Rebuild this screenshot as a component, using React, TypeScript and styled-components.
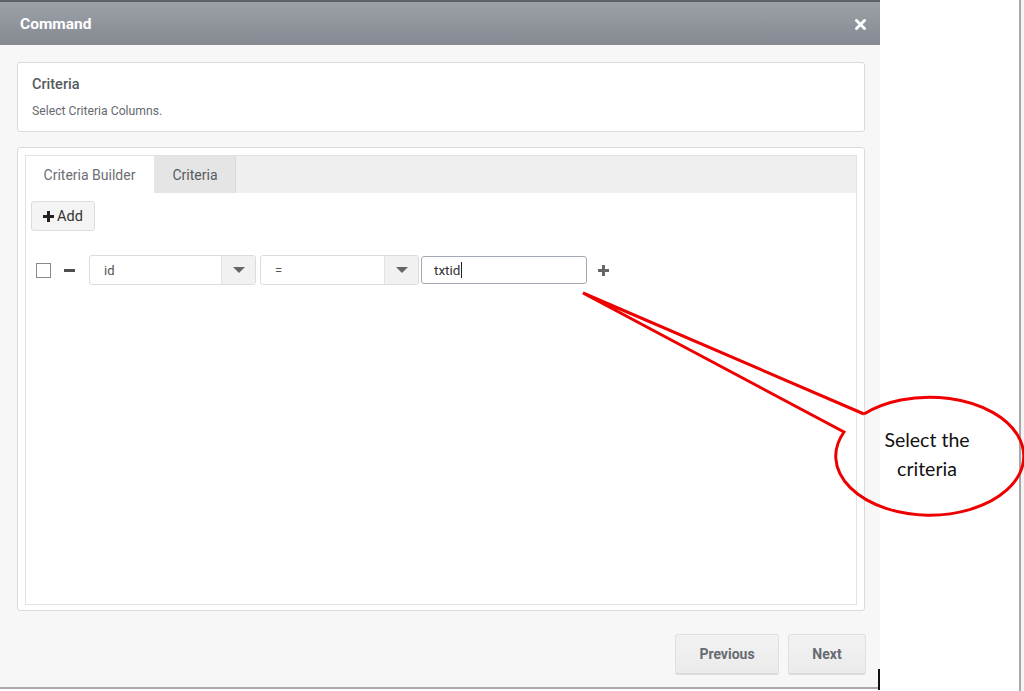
import React from "react";
import styled, { createGlobalStyle } from "styled-components";

const GlobalStyle = createGlobalStyle`
  html, body {
    margin: 0;
    padding: 0;
    background: #ffffff;
  }
  body {
    font-family: Roboto, "Liberation Sans", Arial, sans-serif;
    overflow: hidden;
  }
`;

const Page = styled.div`
  position: relative;
  display: flex;
  width: 1024px;
  height: 691px;
  background: #ffffff;
`;

const Modal = styled.div`
  position: relative;
  display: flex;
  flex-direction: column;
  width: 880px;
  height: 687px;
  background: #f7f7f7;
  border-bottom: 2px solid #a9a9a9;

  &::after {
    content: "";
    position: absolute;
    right: 0;
    bottom: -3px;
    width: 2px;
    height: 21px;
    background: #111;
  }
`;

const Header = styled.div`
  display: flex;
  align-items: center;
  justify-content: space-between;
  height: 45px;
  box-sizing: border-box;
  padding: 1px 14px 0 20px;
  border-top: 2px solid #5d6168;
  background: linear-gradient(#9ca0a7, #858a92);
  color: #ffffff;
`;

const Title = styled.div`
  font-size: 15.5px;
  font-weight: 700;
`;

const Close = styled.svg`
  width: 11px;
  height: 11px;
`;

const Body = styled.div`
  display: flex;
  flex-direction: column;
  padding: 17px 15px 0 17px;
  gap: 15px;
`;

const Panel = styled.div`
  background: #ffffff;
  border: 1px solid #dadada;
  border-radius: 3px;
`;

const InfoPanel = styled(Panel)`
  height: 70px;
  box-sizing: border-box;
  padding: 13px 14px;
`;

const PanelTitle = styled.div`
  font-size: 14.5px;
  font-weight: 500;
  color: #555a60;
`;

const PanelText = styled.div`
  margin-top: 11px;
  font-size: 12.2px;
  color: #666a70;
`;

const BuilderPanel = styled(Panel)`
  height: 464px;
  box-sizing: border-box;
  padding: 7px 7px 5px 7px;
  display: flex;
`;

const TabBox = styled.div`
  flex: 1;
  display: flex;
  flex-direction: column;
  border: 1px solid #e2e2e2;
`;

const TabBar = styled.div`
  display: flex;
  height: 37px;
  background: #efefef;
`;

const Tab = styled.div<{ $active?: boolean }>`
  display: flex;
  align-items: center;
  justify-content: center;
  width: ${(p) => (p.$active ? "127px" : "80px")};
  background: ${(p) => (p.$active ? "#ffffff" : "#e5e5e5")};
  border-right: 1px solid ${(p) => (p.$active ? "#ffffff" : "#d8d8d8")};
  border-left: ${(p) => (p.$active ? "none" : "1px solid #e8e8e8")};
  font-size: 14px;
  color: ${(p) => (p.$active ? "#6a6e74" : "#555a60")};
`;

const TabContent = styled.div`
  display: flex;
  flex-direction: column;
  align-items: flex-start;
  padding: 8px 5px;
  gap: 24px;
`;

const AddButton = styled.button`
  display: flex;
  align-items: center;
  gap: 3px;
  height: 30px;
  width: 64px;
  padding: 0 0 0 11px;
  border: 1px solid #dcdcdc;
  border-radius: 3px;
  background: #f4f4f4;
  font-family: Roboto, "Liberation Sans", Arial, sans-serif;
  font-size: 14.5px;
  color: #333;
`;

const Row = styled.div`
  display: flex;
  align-items: center;
  height: 30px;
  padding-left: 5px;
`;

const Checkbox = styled.span`
  width: 13px;
  height: 13px;
  border: 1px solid #8a8a8a;
  background: #fff;
`;

const Minus = styled.span`
  width: 11px;
  height: 3px;
  margin: 0 14px 0 13px;
  background: #4f4f4f;
`;

const Select = styled.div<{ $width: number }>`
  display: flex;
  width: ${(p) => p.$width}px;
  height: 30px;
  box-sizing: border-box;
  border: 1px solid #dcdcdc;
  border-radius: 3px;
  background: #ffffff;
  margin-right: 4px;
  overflow: hidden;
`;

const SelectValue = styled.div`
  flex: 1;
  display: flex;
  align-items: center;
  padding-left: 14px;
  font-size: 13px;
  color: #555;
`;

const SelectArrow = styled.div`
  display: flex;
  align-items: center;
  justify-content: center;
  width: 33px;
  background: #f1f1f1;
  border-left: 1px solid #e2e2e2;
`;

const Caret = styled.span`
  width: 0;
  height: 0;
  border-left: 6px solid transparent;
  border-right: 6px solid transparent;
  border-top: 6px solid #666;
`;

const TextInput = styled.div`
  display: flex;
  align-items: center;
  width: 166px;
  height: 28px;
  box-sizing: border-box;
  margin-left: -2px;
  padding-left: 12px;
  border: 1px solid #a4aab3;
  border-radius: 3px;
  background: #fff;
  font-size: 13.5px;
  color: #333;
`;

const Cursor = styled.span`
  display: inline-block;
  width: 1px;
  height: 16px;
  margin-left: 1px;
  background: #222;
`;

const PlusIcon = styled.svg`
  width: 11px;
  height: 11px;
  margin-left: 11px;
`;

const Footer = styled.div`
  display: flex;
  justify-content: flex-end;
  gap: 9px;
  padding: 23px 14px 0 0;
`;

const NavButton = styled.button<{ $width: number }>`
  width: ${(p) => p.$width}px;
  height: 41px;
  border: 1px solid #e0e0e0;
  border-bottom: 2px solid #dadada;
  border-radius: 3px;
  background: linear-gradient(#f2f2f2, #ebebeb);
  font-family: Roboto, "Liberation Sans", Arial, sans-serif;
  font-size: 14px;
  font-weight: 700;
  color: #666b71;
`;

const Scrollbar = styled.div`
  margin-left: auto;
  width: 3px;
  height: 100%;
  border-left: 2px solid #a8a8a8;
  background: #f4f4f4;
`;

const Callout = styled.svg`
  position: absolute;
  left: 0;
  top: 0;
  width: 1024px;
  height: 691px;
  pointer-events: none;
`;

const CalloutText = styled.text`
  font-family: Lato, "Open Sans", "Liberation Sans", sans-serif;
  font-size: 19.5px;
  fill: #111;
`;

const PlusPath = ({ color }: { color: string }) => (
  <path d="M4 0h3v4h4v3H7v4H4V7H0V4h4z" fill={color} />
);

export default function App() {
  return (
    <>
      <GlobalStyle />
      <Page>
        <Modal>
          <Header>
            <Title>Command</Title>
            <Close viewBox="0 0 11 11">
              <path
                d="M1.5 1.5l8 8M9.5 1.5l-8 8"
                stroke="#ffffff"
                strokeWidth="2.8"
                strokeLinecap="square"
              />
            </Close>
          </Header>
          <Body>
            <InfoPanel>
              <PanelTitle>Criteria</PanelTitle>
              <PanelText>Select Criteria Columns.</PanelText>
            </InfoPanel>
            <BuilderPanel>
              <TabBox>
                <TabBar>
                  <Tab $active>Criteria Builder</Tab>
                  <Tab>Criteria</Tab>
                </TabBar>
                <TabContent>
                  <AddButton>
                    <svg width="11" height="11" viewBox="0 0 11 11">
                      <PlusPath color="#222" />
                    </svg>
                    Add
                  </AddButton>
                  <Row>
                    <Checkbox />
                    <Minus />
                    <Select $width={167}>
                      <SelectValue>id</SelectValue>
                      <SelectArrow>
                        <Caret />
                      </SelectArrow>
                    </Select>
                    <Select $width={159}>
                      <SelectValue>=</SelectValue>
                      <SelectArrow>
                        <Caret />
                      </SelectArrow>
                    </Select>
                    <TextInput>
                      txtid
                      <Cursor />
                    </TextInput>
                    <PlusIcon viewBox="0 0 11 11">
                      <PlusPath color="#666" />
                    </PlusIcon>
                  </Row>
                </TabContent>
              </TabBox>
            </BuilderPanel>
          </Body>
          <Footer>
            <NavButton $width={104}>Previous</NavButton>
            <NavButton $width={78}>Next</NavButton>
          </Footer>
        </Modal>
        <Scrollbar />
        <Callout viewBox="0 0 1024 691">
          <path
            d="M864 414 L583 293 L844 432 A94 59 0 1 0 864 414"
            fill="none"
            stroke="#ee0000"
            strokeWidth="3"
            strokeLinejoin="miter"
          />
          <CalloutText x="927" y="447" textAnchor="middle">
            Select the
          </CalloutText>
          <CalloutText x="927" y="476" textAnchor="middle">
            criteria
          </CalloutText>
        </Callout>
      </Page>
    </>
  );
}
